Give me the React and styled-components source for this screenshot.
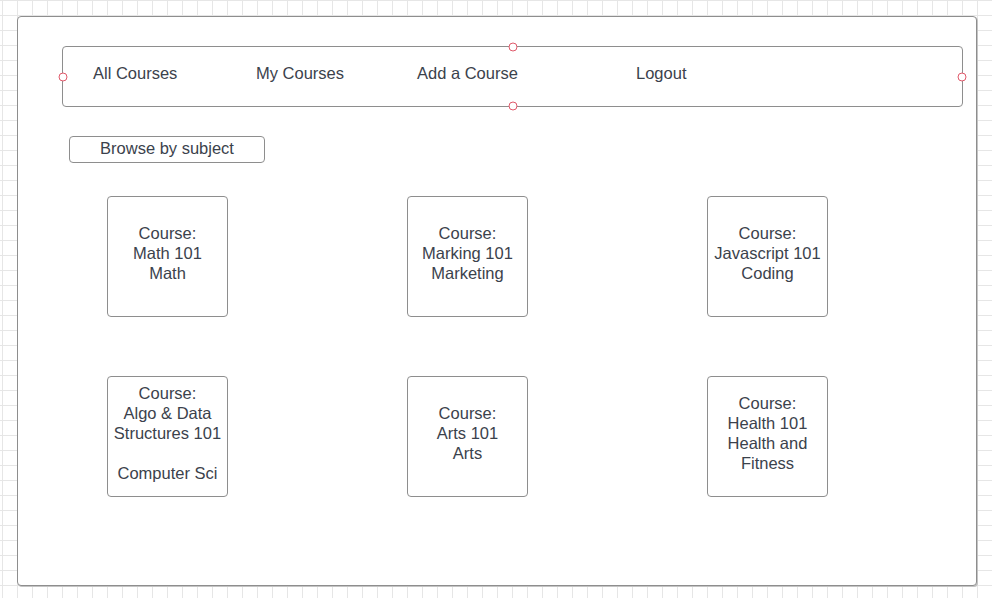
import React from "react";
import styled, { createGlobalStyle } from "styled-components";

const Global = createGlobalStyle`
  html, body {
    margin: 0;
    padding: 0;
  }
  body {
    width: 992px;
    height: 598px;
    overflow: hidden;
    background-color: #ffffff;
    background-image:
      linear-gradient(to right, #e6e6e6 1px, transparent 1px),
      linear-gradient(to bottom, #e6e6e6 1px, transparent 1px);
    background-size: 15px 15px;
    background-position: 2px 0;
    font-family: "Liberation Sans", Arial, sans-serif;
    color: #3b424c;
  }
`;

const Page = styled.div`
  padding: 16px 0 0 17px;
`;

const Frame = styled.div`
  box-sizing: border-box;
  width: 960px;
  height: 570px;
  background: #ffffff;
  border: 1px solid #8e8e8e;
  border-radius: 4px;
  box-shadow: 1px 1px 0 #c4c4c4;
  display: flex;
  flex-direction: column;
  align-items: flex-start;
  padding: 29px 0 0 44px;
`;

const Nav = styled.nav`
  position: relative;
  box-sizing: border-box;
  width: 901px;
  height: 61px;
  border: 1px solid #8e8e8e;
  border-radius: 4px;
  display: grid;
  grid-template-columns: 163px 161px 219px auto;
  align-items: center;
  padding: 0 0 6px 30px;
`;

const NavItem = styled.span`
  font-size: 16.5px;
  white-space: nowrap;
`;

const Handle = styled.span`
  position: absolute;
  box-sizing: border-box;
  width: 9px;
  height: 9px;
  border-radius: 50%;
  border: 1px solid #e05a6b;
  background: #ffffff;
  left: ${(p) => p.$x};
  top: ${(p) => p.$y};
  transform: translate(-50%, -50%);
`;

const BrowseButton = styled.button`
  box-sizing: border-box;
  margin: 29px 0 0 7px;
  width: 196px;
  height: 27px;
  border: 1px solid #8e8e8e;
  border-radius: 4px;
  background: #ffffff;
  font-family: "Liberation Sans", Arial, sans-serif;
  font-size: 16.5px;
  color: #3b424c;
  padding: 0 0 2px 0;
  display: flex;
  align-items: center;
  justify-content: center;
`;

const CourseGrid = styled.div`
  margin: 33px 0 0 45px;
  display: grid;
  grid-template-columns: repeat(3, 121px);
  column-gap: 179px;
  row-gap: 59px;
`;

const Card = styled.div`
  box-sizing: border-box;
  width: 121px;
  height: 121px;
  border: 1px solid #8e8e8e;
  border-radius: 4px;
  display: flex;
  flex-direction: column;
  align-items: center;
  justify-content: center;
  text-align: center;
  font-size: 16.5px;
  line-height: 20px;
  padding-bottom: 7px;
`;

const Line = styled.div`
  white-space: nowrap;
  min-height: 20px;
`;

const courses = [
  ["Course:", "Math 101", "Math"],
  ["Course:", "Marking 101", "Marketing"],
  ["Course:", "Javascript 101", "Coding"],
  ["Course:", "Algo & Data", "Structures 101", "", "Computer Sci"],
  ["Course:", "Arts 101", "Arts"],
  ["Course:", "Health 101", "Health and", "Fitness"],
];

export default function App() {
  return (
    <>
      <Global />
      <Page>
        <Frame>
          <Nav>
            <NavItem>All Courses</NavItem>
            <NavItem>My Courses</NavItem>
            <NavItem>Add a Course</NavItem>
            <NavItem>Logout</NavItem>
            <Handle $x="0px" $y="50%" />
            <Handle $x="100%" $y="50%" />
            <Handle $x="50%" $y="0px" />
            <Handle $x="50%" $y="100%" />
          </Nav>
          <BrowseButton>Browse by subject</BrowseButton>
          <CourseGrid>
            {courses.map((lines, i) => (
              <Card key={i}>
                {lines.map((l, j) => (
                  <Line key={j}>{l}</Line>
                ))}
              </Card>
            ))}
          </CourseGrid>
        </Frame>
      </Page>
    </>
  );
}
